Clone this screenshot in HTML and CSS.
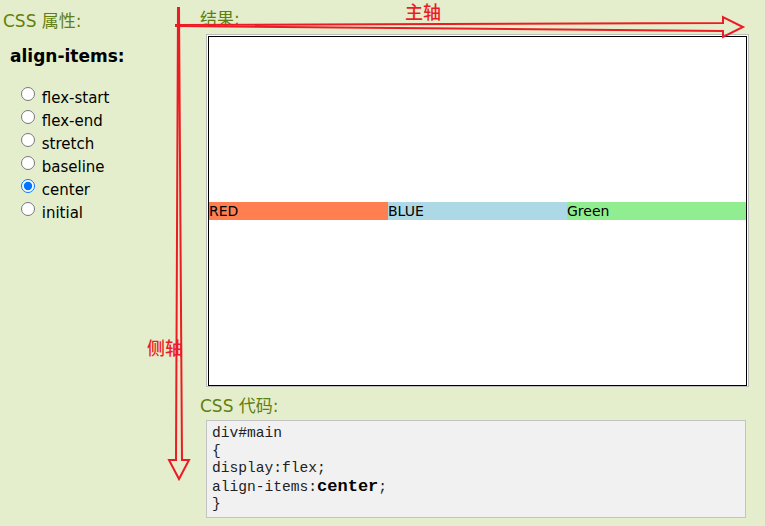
FILE: index.html
```html
<!DOCTYPE html>
<html lang="zh">
<head>
<meta charset="utf-8">
<title>align-items</title>
<link rel="stylesheet" href="styles.css">
</head>
<body>
<div class="page">
  <div class="side">
    <h2 class="heading">CSS 属性:</h2>
    <h3 class="prop">align-items:</h3>
    <div class="options">
      <label class="opt"><input type="radio" name="ai"> flex-start</label>
      <label class="opt"><input type="radio" name="ai"> flex-end</label>
      <label class="opt"><input type="radio" name="ai"> stretch</label>
      <label class="opt"><input type="radio" name="ai"> baseline</label>
      <label class="opt"><input type="radio" name="ai" checked> center</label>
      <label class="opt"><input type="radio" name="ai"> initial</label>
    </div>
  </div>
  <div class="content">
    <h2 class="heading">结果:</h2>
    <div class="result">
      <div class="main">
        <div class="item red">RED</div>
        <div class="item blue">BLUE</div>
        <div class="item green">Green</div>
      </div>
    </div>
    <h2 class="heading code-heading">CSS 代码:</h2>
    <div class="code">div#main<br>{<br>display:flex;<br>align-items:<span class="val">center</span>;<br>}</div>
  </div>
</div>
<div class="overlay">
  <svg class="arrows" width="765" height="526" viewBox="0 0 765 526">
    <polygon points="176,25 723,23 723,17 743,27 723,37 723,31 176,26" fill="none" stroke="#ec1c24" stroke-width="2" stroke-linejoin="miter"/>
    <polygon points="178,8 176,460 169,460 179,479 189,460 182,460 179,8" fill="none" stroke="#ec1c24" stroke-width="2" stroke-linejoin="miter"/>
  </svg>
  <span class="axis axis-main">主轴</span>
  <span class="axis axis-cross">侧轴</span>
</div>
</body>
</html>
```

FILE: styles.css
```css
html, body {
  margin: 0;
  padding: 0;
}
body {
  background: #e5eecc;
  font-family: "DejaVu Sans", "Noto Sans CJK SC", sans-serif;
  color: #000;
  position: relative;
  width: 765px;
  height: 526px;
  overflow: hidden;
}
.page {
  display: flex;
}
.side {
  width: 200px;
  padding-top: 11px;
  box-sizing: border-box;
}
.side .heading {
  padding-left: 3px;
}
.heading {
  margin: 0;
  font-size: 17px;
  line-height: 20px;
  font-weight: normal;
  color: #617f10;
}
.prop {
  margin: 15px 0 0 10px;
  font-size: 17px;
  line-height: 20px;
  font-weight: bold;
}
.options {
  display: flex;
  flex-direction: column;
  margin-top: 20px;
  padding-left: 16px;
}
.opt {
  display: flex;
  align-items: center;
  height: 23px;
  font-size: 15px;
  white-space: pre;
}
.opt input {
  width: 14px;
  height: 14px;
  margin: 0 2px 7px 5px;
}
.content {
  padding-top: 9px;
  display: flex;
  flex-direction: column;
}
.result {
  margin: 5px 0 0 6px;
  width: 540px;
  border: 1px solid #bcbcbc;
  background: #fff;
  padding: 1px 0 0 1px;
}
.main {
  width: 537px;
  height: 348px;
  border: 1px solid #000;
  display: flex;
  align-items: center;
}
.item {
  flex: 1;
  font-size: 14px;
  line-height: 18px;
}
.red { background: coral; }
.blue { background: lightblue; }
.green { background: lightgreen; }
.code-heading {
  margin-top: 9px;
}
.code {
  margin: 4px 0 0 6px;
  border: 1px solid #c3c3c3;
  background: #f1f1f1;
  padding: 4px 0 0 5px;
  width: 533px;
  height: 92px;
  font-family: "Liberation Mono", "Courier New", monospace;
  font-size: 14.6px;
  line-height: 17.5px;
  color: #222;
}
.val {
  font-weight: bold;
  font-size: 17px;
  color: #000;
}
.overlay {
  position: absolute;
  left: 0;
  top: 0;
  width: 765px;
  height: 526px;
  pointer-events: none;
}
.arrows {
  position: absolute;
  left: 0;
  top: 0;
}
.axis {
  position: absolute;
  color: #ec1c24;
  font-family: "Noto Sans CJK SC", sans-serif;
  font-size: 18px;
  line-height: 20px;
  font-weight: 500;
}
.axis-main {
  left: 405px;
  top: 1px;
}
.axis-cross {
  left: 147px;
  top: 337px;
}
```
